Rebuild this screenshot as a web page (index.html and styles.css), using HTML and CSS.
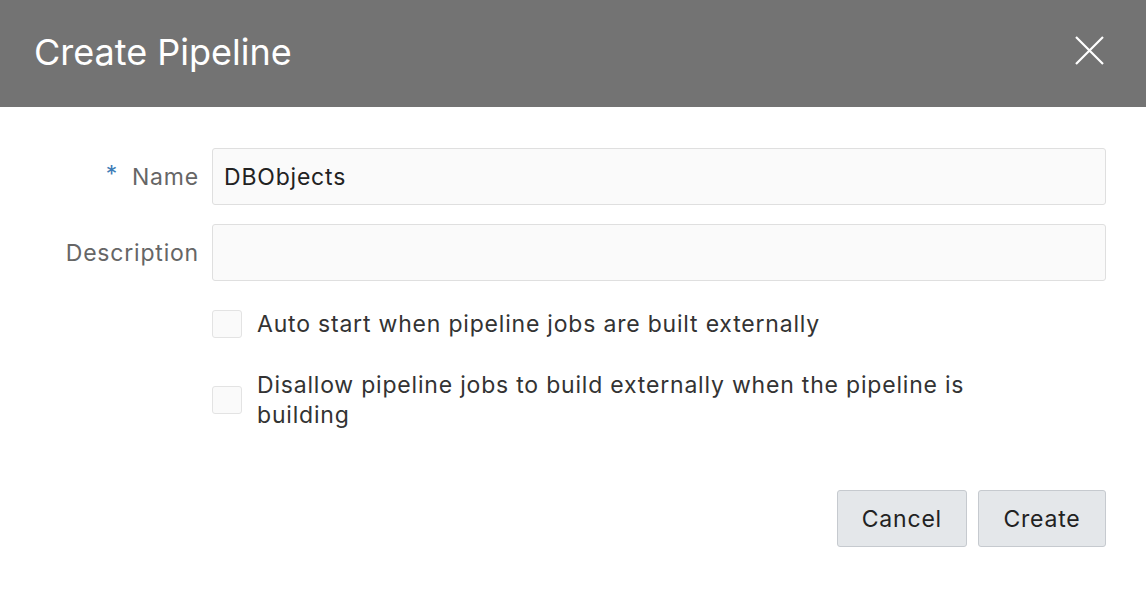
FILE: index.html
```html
<!DOCTYPE html>
<html>
<head>
<meta charset="utf-8">
<link rel="stylesheet" href="styles.css">
</head>
<body>
<div class="dialog">
  <header class="dlg-header">
    <h1 class="dlg-title">Create Pipeline</h1>
    <button class="close-btn" aria-label="Close">
      <svg width="29" height="29" viewBox="0 0 29 29"><path d="M1 1 L28 28 M28 1 L1 28" stroke="#fff" stroke-width="2.2" fill="none"/></svg>
    </button>
  </header>
  <main class="dlg-body">
    <div class="form">
      <label class="form-label"><span class="req">*</span>Name</label>
      <div class="input">DBObjects</div>
      <label class="form-label">Description</label>
      <div class="input"></div>
      <div></div>
      <div class="checks">
        <div class="check-row">
          <span class="checkbox"></span>
          <span class="check-text">Auto start when pipeline jobs are built externally</span>
        </div>
        <div class="check-row">
          <span class="checkbox"></span>
          <span class="check-text">Disallow pipeline jobs to build externally when the pipeline is building</span>
        </div>
      </div>
    </div>
    <div class="actions">
      <button class="btn">Cancel</button>
      <button class="btn">Create</button>
    </div>
  </main>
</div>
</body>
</html>
```
FILE: styles.css
```css
html, body {
  margin: 0;
  padding: 0;
  background: #fff;
}
body {
  font-family: Inter, "Liberation Sans", Arial, sans-serif;
  color: #333;
}
.dlg-header {
  height: 107px;
  background: #737373;
  display: flex;
  align-items: center;
  justify-content: space-between;
  padding: 0 42px 0 34px;
}
.dlg-title {
  margin: 0;
  font-weight: 400;
  font-size: 36px;
  color: #fff;
  letter-spacing: 0;
  padding-bottom: 4px;
}
.close-btn {
  background: none;
  border: 0;
  padding: 0;
  width: 29px;
  height: 29px;
  display: flex;
  margin-bottom: 6px;
}
.dlg-body {
  padding: 41px 40px 0 40px;
}
.form {
  display: grid;
  grid-template-columns: 159px 1fr;
  column-gap: 13px;
  row-gap: 19px;
  align-items: center;
}
.form-label {
  text-align: right;
  font-size: 23px;
  letter-spacing: 0.8px;
  color: #666;
}
.req {
  color: #3e7bb6;
  margin-right: 14px;
  position: relative;
  top: -3px;
}
.input {
  height: 55px;
  border: 1px solid #dfdfdf;
  border-radius: 3px;
  background: #fafafa;
  box-sizing: content-box;
  font-size: 23px;
  letter-spacing: 0.8px;
  color: #222;
  display: flex;
  align-items: center;
  padding: 0 11px;
}
.checks {
  display: flex;
  flex-direction: column;
  gap: 31px;
  padding-top: 9px;
}
.check-row {
  display: flex;
  align-items: center;
  gap: 15px;
}
.checkbox {
  flex: none;
  width: 28px;
  height: 26px;
  border: 1px solid #e3e3e3;
  border-radius: 3px;
  background: #fafafa;
}
.check-text {
  font-size: 23px;
  letter-spacing: 0.8px;
  line-height: 30px;
  color: #333;
  max-width: 760px;
}
.actions {
  display: flex;
  justify-content: flex-end;
  gap: 11px;
  margin-top: 60px;
}
.btn {
  height: 57px;
  min-width: 128px;
  padding: 0 24px;
  border: 1px solid #c6cacf;
  border-radius: 3px;
  background: #e4e7ea;
  font-family: Inter, "Liberation Sans", Arial, sans-serif;
  font-size: 23px;
  letter-spacing: 0.8px;
  color: #222;
}
```
